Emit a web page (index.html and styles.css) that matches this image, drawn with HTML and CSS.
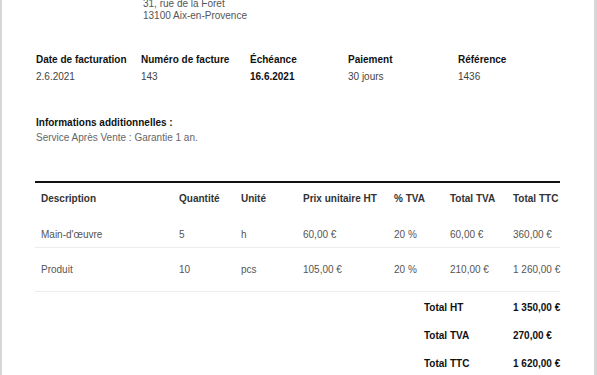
FILE: index.html
```html
<!DOCTYPE html>
<html lang="fr">
<head>
<meta charset="utf-8">
<title>Facture</title>
<link rel="stylesheet" href="styles.css">
</head>
<body>
<div class="page">
  <div class="address">
    <div>31, rue de la Foret</div>
    <div>13100 Aix-en-Provence</div>
  </div>

  <div class="meta">
    <div class="meta-col c1">
      <div class="meta-label">Date de facturation</div>
      <div class="meta-value">2.6.2021</div>
    </div>
    <div class="meta-col c2">
      <div class="meta-label">Numéro de facture</div>
      <div class="meta-value">143</div>
    </div>
    <div class="meta-col c3">
      <div class="meta-label">Échéance</div>
      <div class="meta-value strong">16.6.2021</div>
    </div>
    <div class="meta-col c4">
      <div class="meta-label">Paiement</div>
      <div class="meta-value">30 jours</div>
    </div>
    <div class="meta-col c5">
      <div class="meta-label">Référence</div>
      <div class="meta-value">1436</div>
    </div>
  </div>

  <div class="notes">
    <div class="notes-title">Informations additionnelles :</div>
    <div class="notes-text">Service Après Vente : Garantie 1 an.</div>
  </div>

  <table class="items">
    <colgroup>
      <col class="w-desc"><col class="w-qty"><col class="w-unit"><col class="w-price"><col class="w-vat"><col class="w-tvat"><col class="w-ttc">
    </colgroup>
    <thead>
      <tr>
        <th>Description</th>
        <th>Quantité</th>
        <th>Unité</th>
        <th>Prix unitaire HT</th>
        <th>% TVA</th>
        <th>Total TVA</th>
        <th>Total TTC</th>
      </tr>
    </thead>
    <tbody>
      <tr class="first">
        <td>Main-d'œuvre</td>
        <td>5</td>
        <td>h</td>
        <td>60,00 €</td>
        <td>20 %</td>
        <td>60,00 €</td>
        <td>360,00 €</td>
      </tr>
      <tr>
        <td>Produit</td>
        <td>10</td>
        <td>pcs</td>
        <td>105,00 €</td>
        <td>20 %</td>
        <td>210,00 €</td>
        <td>1 260,00 €</td>
      </tr>
    </tbody>
  </table>

  <div class="totals">
    <div class="total-row"><span class="t-label">Total HT</span><span class="t-value">1 350,00 €</span></div>
    <div class="total-row"><span class="t-label">Total TVA</span><span class="t-value">270,00 €</span></div>
    <div class="total-row"><span class="t-label">Total TTC</span><span class="t-value">1 620,00 €</span></div>
  </div>
</div>
</body>
</html>
```

FILE: styles.css
```css
html, body {
  margin: 0;
  padding: 0;
}

body {
  background: #d7d7d7;
  font-family: "Liberation Sans", Arial, sans-serif;
  font-size: 10px;
  line-height: 12px;
  color: #111;
}

.page {
  margin: 0 3px 0 2px;
  background: #fff;
  padding: 0 0 0 33px;
  height: 375px;
  overflow: hidden;
}

.address {
  margin-top: -2px;
  margin-left: 108px;
  color: #555;
}

.meta {
  display: flex;
  margin-top: 32px;
  padding-left: 1px;
}

.meta-col.c1 { width: 105px; }
.meta-col.c2 { width: 109px; }
.meta-col.c3 { width: 98px; }
.meta-col.c4 { width: 110px; }
.meta-col.c5 { width: 100px; }

.meta-label {
  font-weight: bold;
  color: #111;
}

.meta-value {
  margin-top: 5px;
  color: #444;
}

.meta-value.strong {
  font-weight: bold;
  color: #111;
}

.notes {
  margin-top: 34px;
  padding-left: 1px;
}

.notes-title {
  font-weight: bold;
  color: #111;
}

.notes-text {
  margin-top: 3px;
  color: #666;
}

.items {
  margin-top: 37px;
  width: 525px;
  border-collapse: collapse;
  table-layout: fixed;
  border-top: 2px solid #111;
}

.w-desc { width: 138px; }
.w-qty { width: 62px; }
.w-unit { width: 62px; }
.w-price { width: 91px; }
.w-vat { width: 56px; }
.w-tvat { width: 63px; }
.w-ttc { width: 53px; }

.items th {
  text-align: left;
  font-weight: bold;
  color: #333;
  padding: 10px 0 16px 6px;
  white-space: nowrap;
}

.items td {
  color: #555;
  padding: 16px 0 15px 6px;
  border-bottom: 1px solid #ececec;
  white-space: nowrap;
}

.items tr.first td {
  padding-top: 8px;
  padding-bottom: 6px;
}

.totals {
  width: 525px;
  margin-top: 2px;
  display: flex;
  flex-direction: column;
  align-items: flex-end;
}

.total-row {
  display: flex;
  padding: 8px 0;
  font-weight: bold;
  color: #111;
}

.t-label {
  width: 89px;
}

.t-value {
  width: 47px;
  white-space: nowrap;
}
```
